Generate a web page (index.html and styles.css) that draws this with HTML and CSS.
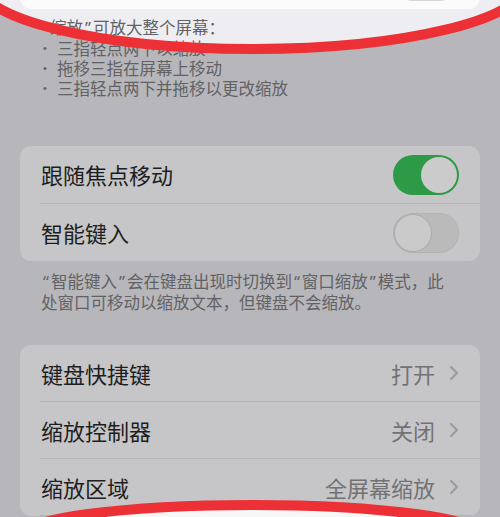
FILE: index.html
```html
<!DOCTYPE html>
<html lang="zh-CN">
<head>
<meta charset="utf-8">
<title>缩放</title>
<link rel="stylesheet" href="styles.css">
</head>
<body>
<div class="screen">
  <svg class="under" width="500" height="517" viewBox="0 0 500 517">
    <ellipse cx="252" cy="-17" rx="274" ry="66" fill="#eeeef2"/>
  </svg>

  <div class="content">
    <div class="card top-card">
      <div class="row">
        <span class="label"></span>
        <div class="toggle off light"><span class="knob"></span></div>
      </div>
    </div>

    <div class="footer first">
      <p><span class="q">“</span>缩放<span class="q">”</span>可放大整个屏幕：</p>
      <p class="item"><span class="bullet">•</span>三指轻点两下以缩放</p>
      <p class="item"><span class="bullet">•</span>拖移三指在屏幕上移动</p>
      <p class="item"><span class="bullet">•</span>三指轻点两下并拖移以更改缩放</p>
    </div>

    <div class="card card-one">
      <div class="row tall">
        <span class="label">跟随焦点移动</span>
        <div class="toggle on"><span class="knob"></span></div>
      </div>
      <div class="sep"></div>
      <div class="row tall">
        <span class="label">智能键入</span>
        <div class="toggle off"><span class="knob"></span></div>
      </div>
    </div>

    <div class="footer second">
      <p><span class="q">“</span>智能键入<span class="q">”</span>会在键盘出现时切换到<span class="q">“</span>窗口缩放<span class="q">”</span>模式，此<br>处窗口可移动以缩放文本，但键盘不会缩放。</p>
    </div>

    <div class="card card-two">
      <div class="row">
        <span class="label">键盘快捷键</span>
        <span class="value">打开</span>
        <svg class="chev" width="10" height="16" viewBox="0 0 10 16"><path d="M2 2 L8 8 L2 14" fill="none" stroke="#9c9c9e" stroke-width="2.2" stroke-linecap="round" stroke-linejoin="round"/></svg>
      </div>
      <div class="sep"></div>
      <div class="row">
        <span class="label">缩放控制器</span>
        <span class="value">关闭</span>
        <svg class="chev" width="10" height="16" viewBox="0 0 10 16"><path d="M2 2 L8 8 L2 14" fill="none" stroke="#9c9c9e" stroke-width="2.2" stroke-linecap="round" stroke-linejoin="round"/></svg>
      </div>
      <div class="sep"></div>
      <div class="row">
        <span class="label">缩放区域</span>
        <span class="value">全屏幕缩放</span>
        <svg class="chev" width="10" height="16" viewBox="0 0 10 16"><path d="M2 2 L8 8 L2 14" fill="none" stroke="#9c9c9e" stroke-width="2.2" stroke-linecap="round" stroke-linejoin="round"/></svg>
      </div>
      <div class="sep"></div>
    </div>
  </div>

  <svg class="over" width="500" height="517" viewBox="0 0 500 517">
    <ellipse cx="252" cy="-17" rx="274" ry="66" fill="none" stroke="#ec3036" stroke-width="10"/>
    <ellipse cx="252" cy="536" rx="232" ry="31" fill="#f7f7f8" stroke="#ec3036" stroke-width="10"/>
  </svg>
</div>
</body>
</html>
```

FILE: styles.css
```css
* {
  box-sizing: border-box;
}

html, body {
  margin: 0;
  padding: 0;
}

body {
  font-family: "Noto Sans CJK SC", "Noto Sans", sans-serif;
  background: #b7b7bb;
}

.screen {
  position: relative;
  width: 500px;
  height: 517px;
  overflow: hidden;
  background: #b7b7bb;
}

.under,
.over {
  position: absolute;
  left: 0;
  top: 0;
}

.under {
  z-index: 0;
}

.over {
  z-index: 2;
  pointer-events: none;
}

.content {
  position: relative;
  z-index: 1;
  padding-top: 1px;
}

.card {
  margin: 0 20px;
  background: #c6c6c8;
  border-radius: 11px;
  overflow: hidden;
}

.top-card {
  margin-top: -48px;
  background: #fbfbfc;
}

.row {
  display: flex;
  align-items: center;
  height: 56px;
  padding: 0 21px 0 21px;
}

.row.tall {
  height: 57px;
}

.label {
  flex: 1;
  font-size: 22px;
  line-height: 30px;
  color: #1e1e20;
  padding-bottom: 1px;
}

.value {
  font-size: 22px;
  line-height: 30px;
  color: #727275;
  padding-bottom: 1px;
  margin-right: 14px;
}

.chev {
  display: block;
}

.sep {
  height: 1px;
  margin-left: 20px;
  background: #b3b3b5;
}

.toggle {
  width: 66px;
  height: 40px;
  border-radius: 20px;
  padding: 2px;
  display: flex;
}

.toggle .knob {
  width: 36px;
  height: 36px;
  border-radius: 50%;
  display: block;
}

.toggle.on {
  background: #2d9a47;
  justify-content: flex-end;
}

.toggle.on .knob {
  background: #cbcbcb;
}

.toggle.off {
  background: #bababa;
  justify-content: flex-start;
  box-shadow: inset 0 0 0 1px #b3b3b3;
}

.toggle.off .knob {
  background: #cacaca;
  box-shadow: 0 0 0 1px #acacac;
}

.toggle.off.light {
  background: #d6d6d8;
  box-shadow: none;
}

.toggle.off.light .knob {
  background: #f4f4f4;
  box-shadow: none;
}

.footer p {
  margin: 0;
  font-size: 16.5px;
  line-height: 20px;
  color: #626265;
}

.q {
  font-family: "Noto Sans", sans-serif;
  padding: 0 2px;
}

.footer.first {
  padding: 8px 20px 0 40px;
}

.footer .item {
  display: flex;
}

.bullet {
  width: 17px;
  padding-left: 3px;
  font-family: "Liberation Sans", sans-serif;
  font-size: 11px;
}

.card-one {
  margin-top: 48px;
}

.footer.second {
  padding: 10px 10px 0 41px;
}

.card-two {
  margin-top: 33px;
}
```
